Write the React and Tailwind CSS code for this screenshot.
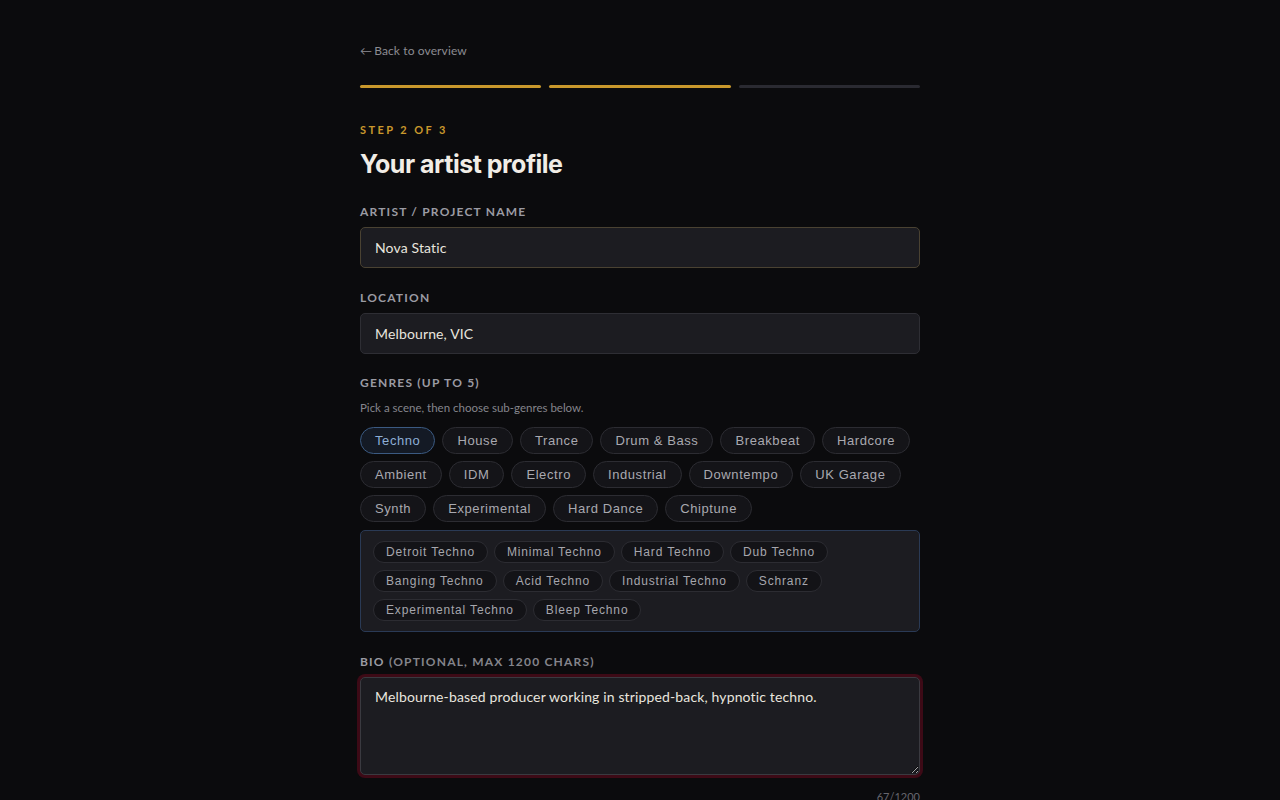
import { useState } from 'react'

const GENRES = ['Techno','House','Trance','Drum & Bass','Breakbeat','Hardcore','Ambient','IDM','Electro','Industrial','Downtempo','UK Garage','Synth','Experimental','Hard Dance','Chiptune']
const SUBS = ['Detroit Techno','Minimal Techno','Hard Techno','Dub Techno','Banging Techno','Acid Techno','Industrial Techno','Schranz','Experimental Techno','Bleep Techno']

const body = { fontFamily: 'Lato, "Noto Sans", sans-serif' }
const chipFont = { fontFamily: '"Liberation Sans", Arial, sans-serif' }

export default function App() {
  const [genre, setGenre] = useState('Techno')
  const [name, setName] = useState('Nova Static')
  const [loc, setLoc] = useState('Melbourne, VIC')
  const [bio, setBio] = useState('Melbourne-based producer working in stripped-back, hypnotic techno.')

  const lbl = 'block text-[12px] font-bold uppercase tracking-[0.1em] text-[#9b9ba3] mb-[6px]'

  return (
    <div className="min-h-screen bg-[#0b0b0d] text-[#e8e5df]" style={body}>
      <div className="w-[560px] mx-auto pt-[37px]">
        <a className="text-[12px] tracking-[0.01em] text-[#8b8b92] inline-flex items-center gap-[2px] cursor-pointer">
          <span>←</span><span>Back to overview</span>
        </a>

        {/* progress */}
        <div className="flex gap-2 mt-[24px]">
          <div className="flex-1 h-[3px] rounded-full bg-[#c9982c]" />
          <div className="flex-1 h-[3px] rounded-full bg-[#c9982c]" />
          <div className="flex-1 h-[3px] rounded-full bg-[#2a2a31]" />
        </div>

        <div className="mt-[34px] text-[11px] font-bold tracking-[0.22em] text-[#c9982c]">STEP 2 OF 3</div>
        <h1 className="mt-[8px] text-[25px] font-bold tracking-[-0.02em] text-[#f1ede6] leading-[34px]" style={{ fontFamily: 'Inter, "Liberation Sans", sans-serif' }}>Your artist profile</h1>

        <div className="mt-[22px]">
          <span className={lbl}>Artist / Project name</span>
          <input value={name} onChange={e => setName(e.target.value)}
            className="w-full h-[41px] rounded-[5px] bg-[#1c1c21] border border-[#4a4232] px-[14px] text-[14px] tracking-[0.01em] text-[#e8e5df] outline-none" />
        </div>

        <div className="mt-[21px]">
          <span className={lbl}>Location</span>
          <input value={loc} onChange={e => setLoc(e.target.value)}
            className="w-full h-[41px] rounded-[5px] bg-[#1c1c21] border border-[#2e2e34] px-[14px] text-[14px] tracking-[0.01em] text-[#e8e5df] outline-none" />
        </div>

        <div className="mt-[20px]">
          <span className="block text-[12px] font-bold uppercase tracking-[0.1em] text-[#9b9ba3]">Genres (up to 5)</span>
          <p className="mt-[7px] text-[11.5px] text-[#85858c]">Pick a scene, then choose sub-genres below.</p>
          <div className="mt-[11px] flex flex-wrap gap-[7px]">
            {GENRES.map(g => (
              <button key={g} onClick={() => setGenre(g)} style={chipFont}
                className={g === genre
                  ? 'h-[27px] px-[14px] rounded-full border border-[#3b5a82] bg-[#141a25] text-[13px] tracking-[0.045em] text-[#8daed6]'
                  : 'h-[27px] px-[14px] rounded-full border border-[#2c2c32] bg-[#141418] text-[13px] tracking-[0.045em] text-[#a9a9b0]'}>
                {g}
              </button>
            ))}
          </div>
          <div className="mt-[8px] rounded-[5px] border border-[#2a3a55] bg-[#1c1c21] py-[10px] px-[12px] flex flex-wrap gap-x-[6px] gap-y-[7px]">
            {SUBS.map(s => (
              <button key={s} style={chipFont}
                className="h-[22px] px-[12px] rounded-full border border-[#2c2c32] bg-[#131317] text-[12px] tracking-[0.07em] text-[#a6a6ad]">
                {s}
              </button>
            ))}
          </div>
        </div>

        <div className="mt-[21px]">
          <span className="block text-[12px] font-bold uppercase tracking-[0.1em] text-[#9b9ba3] mb-[6px]">
            Bio <span className="text-[#84848b]">(optional, max 1200 chars)</span>
          </span>
          <textarea value={bio} onChange={e => setBio(e.target.value)}
            className="block w-full h-[98px] rounded-[5px] bg-[#1c1c21] border border-[#3a3a40] ring-[3px] ring-[#3d0a16] px-[14px] py-[8px] text-[14px] tracking-[0.01em] text-[#e8e5df] outline-none resize-y" />
          <div className="mt-[14px] text-right text-[11px] text-[#66666d]">{bio.length}/1200</div>
        </div>
      </div>
    </div>
  )
}
